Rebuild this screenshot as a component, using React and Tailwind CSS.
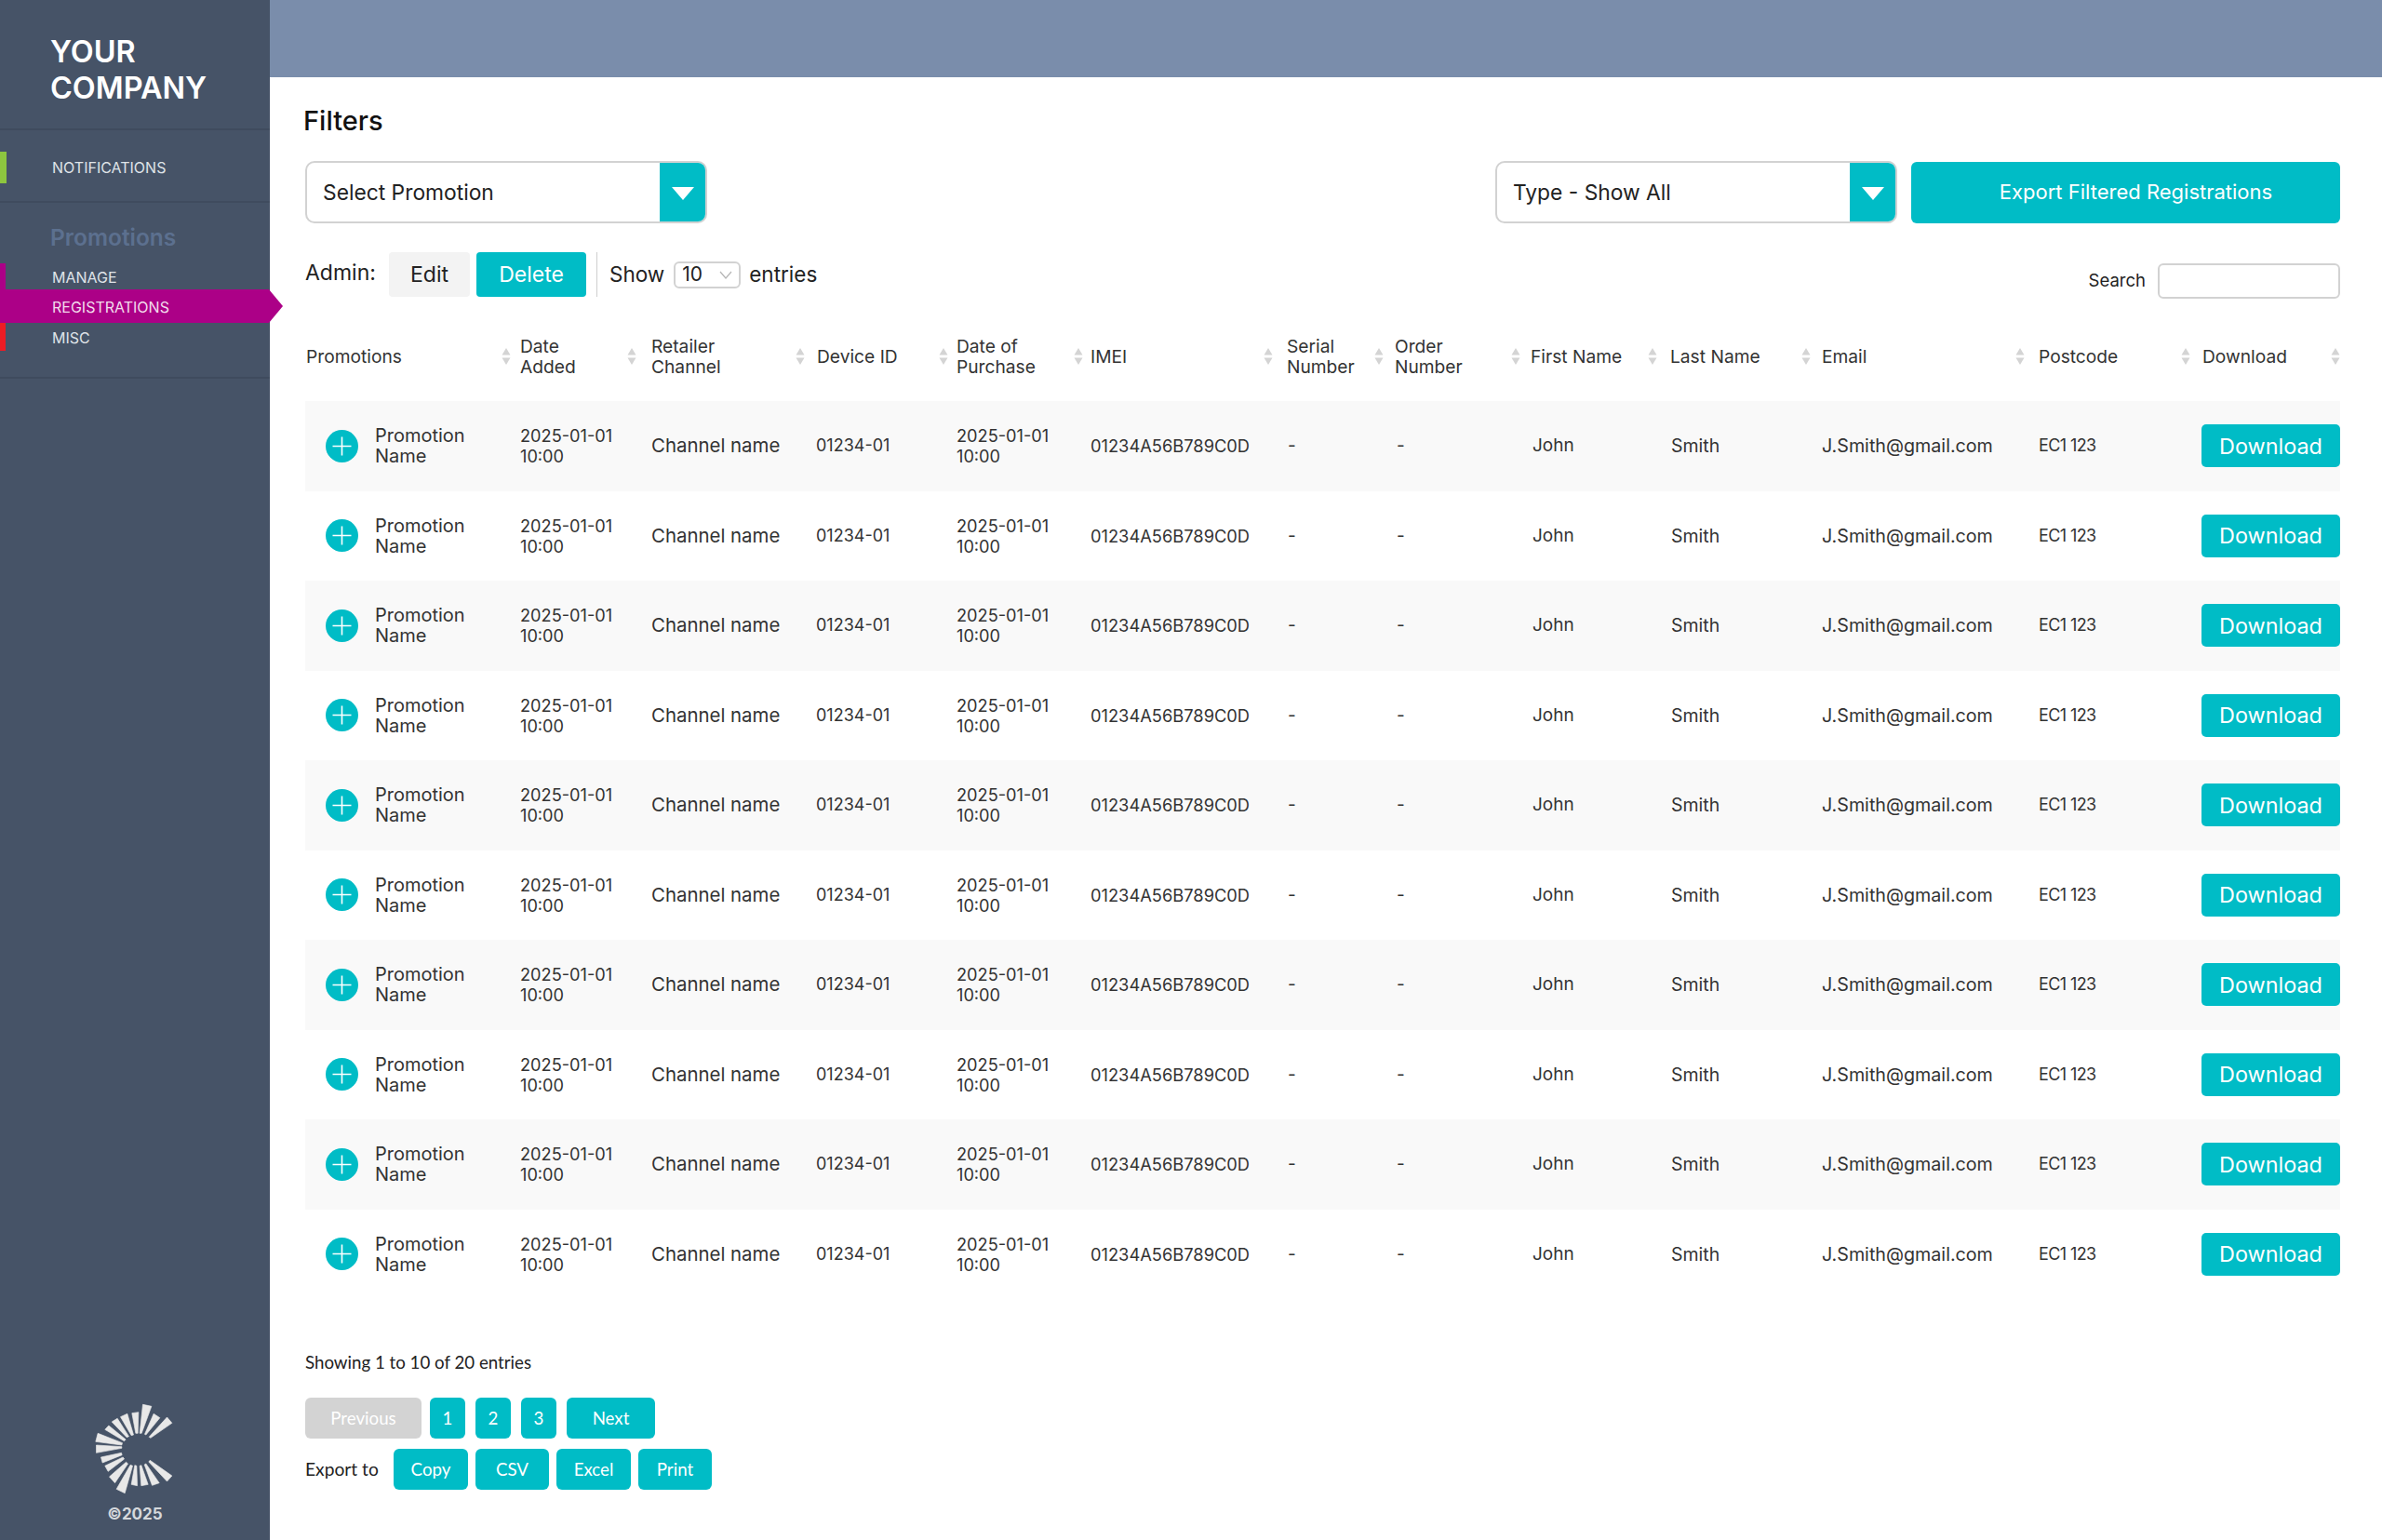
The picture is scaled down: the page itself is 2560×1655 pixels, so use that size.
import React from "react";

const teal = "bg-[#00bcc6]";

const columns = [
  { label: ["Promotions"], width: "w-[230px]", pr: "pr-[9px]" },
  { label: ["Date", "Added"], width: "w-[141px]", pr: "pr-[15px]" },
  { label: ["Retailer", "Channel"], width: "w-[178px]", pr: "pr-[12px]" },
  { label: ["Device ID"], width: "w-[150px]", pr: "pr-[8px]" },
  { label: ["Date of", "Purchase"], width: "w-[144px]", pr: "pr-[7px]" },
  { label: ["IMEI"], width: "w-[211px]", pr: "pr-[14px]" },
  { label: ["Serial", "Number"], width: "w-[116px]", pr: "pr-[11px]" },
  { label: ["Order", "Number"], width: "w-[146px]", pr: "pr-[10px]" },
  { label: ["First Name"], width: "w-[150px]", pr: "pr-[13px]" },
  { label: ["Last Name"], width: "w-[163px]", pr: "pr-[11px]" },
  { label: ["Email"], width: "w-[233px]", pr: "pr-[14px]" },
  { label: ["Postcode"], width: "w-[176px]", pr: "pr-[12px]" },
  { label: ["Download"], width: "w-[149px]", pr: "pr-0" },
];

const rows = Array.from({ length: 10 }, (_, i) => i);

function SortIcon() {
  return (
    <svg width="10" height="18" viewBox="0 0 10 18" className="shrink-0 text-[#d4d4d4]" fill="currentColor">
      <path d="M5 0l4.5 7.5h-9z" />
      <path d="M5 18L.5 10.5h9z" />
    </svg>
  );
}

function Caret() {
  return (
    <svg width="24" height="14" viewBox="0 0 24 14" fill="#fff" className="mt-[2px]">
      <path d="M0 0h24L12 14z" />
    </svg>
  );
}

function Dropdown({ label }) {
  return (
    <div className="flex h-[67px] w-[432px] overflow-hidden rounded-[10px] border-2 border-[#d2d2d2] bg-white">
      <div className="flex flex-1 items-center pl-[17px] pt-[2px] text-[22.8px] text-[#222]">{label}</div>
      <div className={`flex w-[49px] items-center justify-center ${teal}`}>
        <Caret />
      </div>
    </div>
  );
}

function Logo() {
  const rays = [
    "280,52 308,58 276,145 270,145",
    "315,82 335,95 290,150 286,148",
    "358,93 374,112 305,160 300,157",
    "245,80 266,77 264,145 257,145",
    "208,92 230,82 250,150 243,152",
    "180,108 198,97 235,155 228,158",
    "158,133 170,120 225,165 220,170",
    "135,145 128,172 212,183 214,176",
    "130,183 130,208 212,193 212,188",
    "145,222 150,240 213,215 211,208",
    "158,250 168,268 220,228 216,222",
    "172,285 190,305 232,243 226,238",
    "195,325 222,338 247,250 240,247",
    "243,310 262,314 260,250 254,248",
    "275,314 297,310 275,248 270,250",
    "310,313 333,305 290,243 285,246",
    "358,300 374,282 303,232 299,237",
  ];
  return (
    <svg width="87" height="100" viewBox="120 45 260 300" fill="#e8e8e8" className="mr-[3px]">
      {rays.map((points) => (
        <polygon key={points} points={points} strokeLinejoin="round" stroke="#e8e8e8" strokeWidth="2" />
      ))}
    </svg>
  );
}

function Sidebar() {
  return (
    <aside className="relative z-10 flex w-[290px] shrink-0 flex-col bg-[#465367]">
      <div className="h-[140px] border-b-2 border-[#3f4b5e] pl-[54px] pt-[36px] text-[32.4px] font-semibold leading-[39px] text-white">
        YOUR
        <br />
        COMPANY
      </div>
      <div className="flex h-[78px] items-center border-b-2 border-[#3f4b5e] pt-[4px]">
        <div className="h-[34px] w-[7px] bg-[#8dc63f]" />
        <span className="pl-[49px] text-[16px] text-[#dfe3e8]">NOTIFICATIONS</span>
      </div>
      <div className="h-[189px] border-b-2 border-[#3f4b5e]">
        <div className="pl-[54px] pt-[22px] text-[24.5px] font-semibold leading-[30px] text-[#5c708f]">Promotions</div>
        <div className="mt-[13px] flex h-[28px] items-center">
          <div className="h-full w-[6px] bg-[#ac0087]" />
          <span className="pl-[50px] pt-[2px] text-[16px] text-[#dfe3e8]">MANAGE</span>
        </div>
        <div className="flex h-[36px] w-[304px] items-center bg-[#ac0087] pl-[56px] pt-[2px] text-[16px] text-[#f2dcec] [clip-path:polygon(0_0,289px_0,100%_50%,289px_100%,0_100%)]">
          REGISTRATIONS
        </div>
        <div className="flex h-[30px] items-center">
          <div className="h-full w-[6px] bg-[#ed1c24]" />
          <span className="pl-[50px] pt-[2px] text-[16px] text-[#dfe3e8]">MISC</span>
        </div>
      </div>
      <div className="mt-auto flex flex-col items-center pb-[17px]">
        <Logo />
        <div className="mt-[9px] text-[17px] font-bold leading-[22px] text-[#d5d8dc]">©2025</div>
      </div>
    </aside>
  );
}

function Row({ odd }) {
  const text = "flex items-center leading-[22px] text-[#333]";
  return (
    <div className={`flex h-[96.5px] ${odd ? "bg-[#f9f9f9]" : "bg-white"}`}>
      <div className={`${text} w-[230px] pl-[22px] text-[20px]`}>
        <svg width="35" height="35" viewBox="0 0 35 35" className="shrink-0">
          <circle cx="17.5" cy="17.5" r="17.5" fill="#00bcc6" />
          <path d="M17.5 7.5v20M7.5 17.5h20" stroke="#fff" strokeWidth="1.6" />
        </svg>
        <span className="pl-[18px]">
          Promotion
          <br />
          Name
        </span>
      </div>
      <div className={`${text} w-[141px] pl-px text-[18.2px]`}>
        <span>
          2025-01-01
          <br />
          10:00
        </span>
      </div>
      <div className={`${text} w-[178px] pl-px text-[20.4px]`}>Channel name</div>
      <div className={`${text} w-[150px] text-[18px]`}>01234-01</div>
      <div className={`${text} w-[144px] pl-px text-[18.2px]`}>
        <span>
          2025-01-01
          <br />
          10:00
        </span>
      </div>
      <div className={`${text} w-[211px] pl-px text-[18.3px]`}>01234A56B789C0D</div>
      <div className={`${text} w-[116px] pl-[2px] text-[19px]`}>-</div>
      <div className={`${text} w-[146px] pl-[3px] text-[19px]`}>-</div>
      <div className={`${text} w-[150px] pl-[3px] text-[19px]`}>John</div>
      <div className={`${text} w-[163px] pl-[2px] text-[19.5px]`}>Smith</div>
      <div className={`${text} w-[233px] pl-px text-[19.7px]`}>J.Smith@gmail.com</div>
      <div className={`${text} w-[176px] pl-px text-[18px] tracking-[-0.6px]`}>EC1 123</div>
      <div className="flex w-[149px] items-center">
        <button className={`h-[46px] w-[149px] rounded-[5px] text-[23.4px] text-white ${teal}`}>Download</button>
      </div>
    </div>
  );
}

function FootButton({ children, width, muted }) {
  return (
    <button
      className={`h-[44px] rounded-[6px] font-['Lato',sans-serif] text-[18.7px] text-white ${width} ${muted ? "bg-[#d3d3d3]" : teal}`}
    >
      {children}
    </button>
  );
}

export default function App() {
  return (
    <div className="flex min-h-[1655px] bg-white font-['Inter',sans-serif]">
      <Sidebar />
      <main className="min-w-0 flex-1">
        <div className="h-[83px] bg-[#7a8dab]" />
        <div className="pl-[38px] pr-[45px]">
          <h1 className="-ml-[2px] pt-[28px] text-[29px] font-medium leading-[38px] text-[#111]">Filters</h1>

          <div className="mt-[24px] flex items-center justify-between">
            <Dropdown label="Select Promotion" />
            <div className="flex items-center gap-[15px]">
              <Dropdown label="Type - Show All" />
              <button className={`h-[66px] w-[461px] rounded-[6px] pl-[22px] text-[22px] text-white ${teal}`}>
                Export Filtered Registrations
              </button>
            </div>
          </div>

          <div className="mt-[31px] flex items-start justify-between">
            <div className="flex h-[48px] items-center">
              <span className="w-[90px] -translate-y-[2px] text-[23px] text-[#222]">Admin:</span>
              <button className="h-[48px] w-[87px] rounded-[4px] bg-[#f3f3f3] text-[23px] text-[#222]">Edit</button>
              <button className={`ml-[7px] h-[48px] w-[118px] rounded-[4px] text-[23px] text-white ${teal}`}>Delete</button>
              <div className="ml-[11px] h-[48px] w-px bg-[#cfcfcf]" />
              <span className="ml-[13px] text-[22.5px] text-[#222]">Show</span>
              <div className="ml-[10px] flex h-[29px] w-[72px] items-center justify-between rounded-[6px] border-2 border-[#d2d2d2] pl-[7px] pr-[7px] text-[21px] text-[#222]">
                10
                <svg width="14" height="9" viewBox="0 0 14 9" fill="none" stroke="#b5b5b5" strokeWidth="1.2">
                  <path d="M1 1l6 7 6-7" />
                </svg>
              </div>
              <span className="ml-[9px] text-[22.5px] text-[#222]">entries</span>
            </div>
            <div className="mt-[12px] flex items-center gap-[13px]">
              <span className="text-[18.5px] text-[#222]">Search</span>
              <div className="h-[38px] w-[196px] rounded-[6px] border-2 border-[#d2d2d2]" />
            </div>
          </div>

          <div className="mt-[26px] flex h-[72px] items-center">
            {columns.map((col) => (
              <div key={col.label[0]} className={`flex items-center justify-between pl-px ${col.width} ${col.pr}`}>
                <span className="text-[19.2px] leading-[22px] text-[#333]">
                  {col.label.map((line) => (
                    <span key={line} className="block">
                      {line}
                    </span>
                  ))}
                </span>
                <SortIcon />
              </div>
            ))}
          </div>

          <div className="mt-[12px]">
            {rows.map((i) => (
              <Row key={i} odd={i % 2 === 0} />
            ))}
          </div>

          <div className="mt-[55px] font-['Lato',sans-serif] text-[18.7px] leading-[26px] text-[#222]">
            Showing 1 to 10 of 20 entries
          </div>

          <div className="mt-[25px] flex gap-[11px]">
            <div className="mr-[-2px]">
              <FootButton width="w-[125px]" muted>
                Previous
              </FootButton>
            </div>
            <FootButton width="w-[38px]">1</FootButton>
            <FootButton width="w-[38px]">2</FootButton>
            <FootButton width="w-[38px]">3</FootButton>
            <FootButton width="w-[95px]">Next</FootButton>
          </div>

          <div className="mt-[11px] flex items-center gap-[8px]">
            <span className="w-[87px] font-['Lato',sans-serif] text-[19.2px] text-[#222]">Export to</span>
            <FootButton width="w-[80px]">Copy</FootButton>
            <FootButton width="w-[79px]">CSV</FootButton>
            <FootButton width="w-[80px]">Excel</FootButton>
            <FootButton width="w-[79px]">Print</FootButton>
          </div>
        </div>
      </main>
    </div>
  );
}
